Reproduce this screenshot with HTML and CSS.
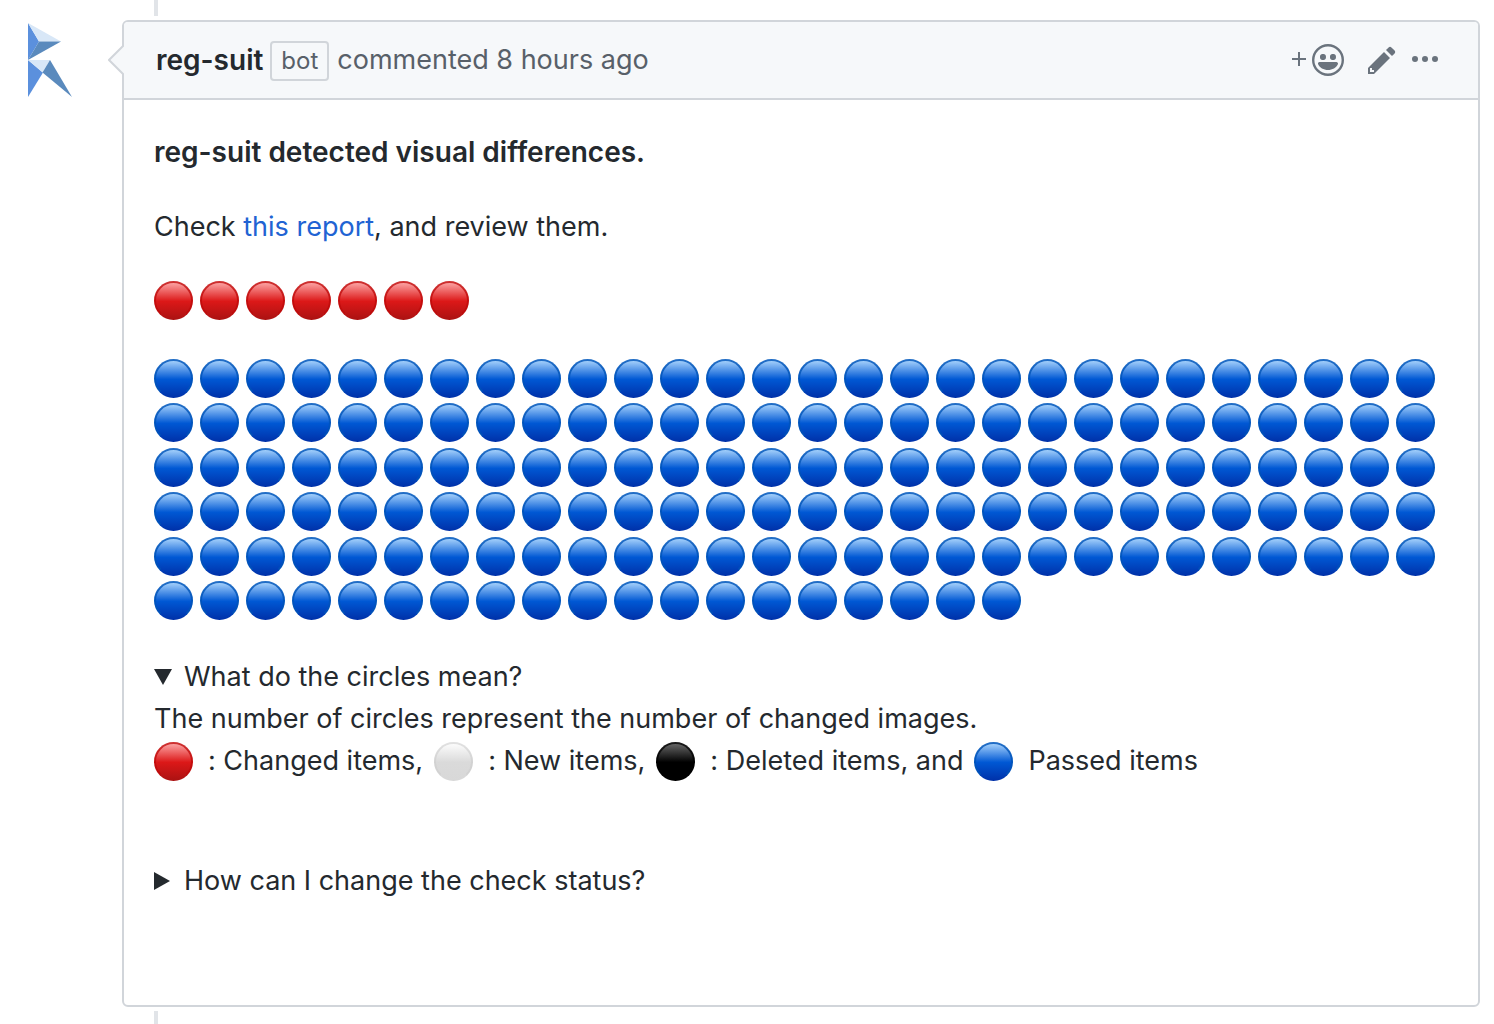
FILE: index.html
```html
<!DOCTYPE html>
<html lang="en">
<head>
  <meta charset="utf-8">
  <title>reg-suit comment</title>
  <link rel="stylesheet" href="styles.css">
</head>
<body>
  <main class="timeline">
    <a class="avatar" href="#" aria-label="reg-suit">
      <svg width="44" height="74" viewBox="0 0 44 74">
        <path fill="#5b90dd" d="M0 0l11 18.500L0 37z"/>
        <path fill="#d8e7f7" d="M0 0l33 18.500H11z"/>
        <path fill="#5a8abd" d="M11 18.500h22L0 37z"/>
        <path fill="#5b90dd" d="M0 37l15 12.500L0 74z"/>
        <path fill="#d8e7f7" d="M0 37h22l-7.500 12.500z"/>
        <path fill="#5a8abd" d="M22 37l22 37-29.500-24.500z"/>
      </svg>
    </a>
    <div class="thread">
      <article class="comment">
        <header class="comment-header">
          <svg class="caret" width="16" height="30" viewBox="0 0 16 30">
            <path d="M16 0L1 15l15 15" fill="#f6f8fa" stroke="#d1d5da" stroke-width="2"/>
          </svg>
          <h3 class="byline"><strong class="author">reg-suit</strong><span class="badge">bot</span><span>commented 8 hours ago</span></h3>
          <div class="actions">
            <button class="action" type="button" aria-label="Add reaction">
              <svg width="52" height="32" viewBox="0 0 26 16">
                <path d="M3 4h1v3h3v1H4v3H3V8H0V7h3z"/>
                <circle cx="18" cy="8" r="7.400" fill="none" stroke="currentColor" stroke-width="1.200"/>
                <path transform="translate(10)" d="M4 6.800v-.59c0-.66.53-1.190 1.200-1.190h.59c.66 0 1.190.53 1.190 1.190v.59c0 .67-.53 1.200-1.190 1.200H5.200C4.530 8 4 7.470 4 6.800zm5 0v-.59c0-.66.53-1.190 1.200-1.190h.59c.66 0 1.190.53 1.190 1.190v.59c0 .67-.53 1.200-1.190 1.200h-.59C9.530 8 9 7.470 9 6.800zm4 3.200c-.72 1.880-2.910 3-5 3s-4.280-1.130-5-3c-.14-.39.23-1 .66-1h8.590c.41 0 .89.61.75 1z"/>
              </svg>
            </button>
            <button class="action edit" type="button" aria-label="Edit comment">
              <svg width="28" height="32" viewBox="0 0 14 16">
                <path fill-rule="evenodd" d="M0 12v3h3l8-8-3-3-8 8zm3 2H1v-2h1v1h1v1zm10.300-9.300L12 6 9 3l1.300-1.300a.996.996 0 0 1 1.410 0l1.590 1.590c.39.39.39 1.020 0 1.410z"/>
              </svg>
            </button>
            <button class="action more" type="button" aria-label="Show options">
              <svg width="26" height="32" viewBox="0 0 13 16">
                <circle cx="1.500" cy="7.500" r="1.500"/><circle cx="6.500" cy="7.500" r="1.500"/><circle cx="11.500" cy="7.500" r="1.500"/>
              </svg>
            </button>
          </div>
        </header>
        <div class="comment-body">
          <p><strong>reg-suit detected visual differences.</strong></p>
          <p>Check <a class="link" href="#">this report</a>, and review them.</p>
          <div class="dots" data-kind="red" data-count="7"></div>
          <div class="dots passed" data-kind="blue" data-count="159"></div>
          <details class="faq" open>
            <summary>What do the circles mean?</summary>
            <div>The number of circles represent the number of changed images.</div>
            <div class="legend">
              <span class="dot red"></span><span class="meaning">: Changed items,</span>
              <span class="dot white"></span><span class="meaning">: New items,</span>
              <span class="dot black"></span><span class="meaning">: Deleted items, and</span>
              <span class="dot blue"></span><span class="meaning">Passed items</span>
            </div>
          </details>
          <details class="faq">
            <summary>How can I change the check status?</summary>
          </details>
        </div>
      </article>
    </div>
  </main>
  <script src="dots.js"></script>
</body>
</html>
```
FILE: styles.css
```css
* {
  box-sizing: border-box;
}

body {
  margin: 0;
  background: #fff;
  color: #24292e;
  font-family: Inter, "Liberation Sans", sans-serif;
  font-size: 27px;
  font-variant-ligatures: no-contextual;
  line-height: 42px;
}

p {
  margin: 0 0 32px;
}

strong {
  font-size: 28px;
  font-weight: 600;
}

.timeline {
  display: grid;
  grid-template-columns: 94px 1fr;
  min-height: 100vh;
  padding: 0 14px 0 28px;
}

.avatar {
  padding-top: 23px;
}

.avatar svg {
  display: block;
}

.thread {
  display: flex;
  flex-direction: column;
}

.thread::before,
.thread::after {
  content: "";
  width: 4px;
  margin-left: 32px;
  background: #e1e4e8;
}

.thread::before {
  height: 16px;
  margin-bottom: 4px;
}

.thread::after {
  flex: 1;
  margin-top: 4px;
}

.comment {
  border: 2px solid #d1d5da;
  border-radius: 6px;
}

.comment-header {
  position: relative;
  display: flex;
  align-items: center;
  justify-content: space-between;
  padding: 17px 40px 17px 32px;
  border-bottom: 2px solid #d1d5da;
  border-radius: 4px 4px 0 0;
  background: #f6f8fa;
}

.caret {
  position: absolute;
  top: 23px;
  left: -16px;
}

.byline {
  display: flex;
  align-items: center;
  margin: 0;
  color: #586069;
  font-size: 27px;
  font-weight: 400;
  line-height: 40px;
}

.author {
  color: #24292e;
}

.badge {
  margin: 2px 8px 0 7px;
  padding: 0 9px;
  border: 2px solid #d1d5da;
  border-radius: 4px;
  font-size: 24px;
  line-height: 36px;
}

.actions {
  display: flex;
}

.action {
  padding: 0;
  border: 0;
  background: none;
  color: #6a737d;
}

.action svg {
  display: block;
  fill: currentColor;
}

.edit {
  margin-left: 24px;
}

.more {
  margin-left: 16px;
}

.comment-body {
  padding: 31px 30px 103px;
}

.link {
  color: #2163d3;
  text-decoration: none;
}

.dots {
  display: flex;
  flex-wrap: wrap;
  align-content: space-between;
  column-gap: 7px;
  row-gap: 4px;
  margin-bottom: 39px;
  padding-top: 1px;
}

.dots.passed {
  min-height: 261px;
  margin-bottom: 36px;
  padding-top: 0;
}

.dot {
  flex: none;
  width: 39px;
  height: 39px;
  border: 2px solid;
  border-color: var(--edge) var(--edge) transparent;
  border-radius: 50%;
  background: linear-gradient(var(--shine), var(--middle) 52%, var(--base)) border-box;
}

.red {
  --edge: rgba(190, 10, 10, 0.75);
  --shine: #ffb0b0;
  --middle: #dc1818;
  --base: #aa1212;
}

.blue {
  --edge: rgba(0, 84, 184, 0.8);
  --shine: #b4dcff;
  --middle: #0058d4;
  --base: #0030a8;
}

.white {
  --edge: rgba(205, 205, 205, 0.6);
  --shine: #fff;
  --middle: #dadada;
  --base: #d8d8d8;
}

.black {
  --edge: rgba(0, 0, 0, 0.75);
  --shine: #707070;
  --middle: #000;
  --base: #000;
}

.faq {
  margin-bottom: 78px;
}

.faq:last-child {
  margin-bottom: 0;
}

.faq summary {
  display: flex;
  align-items: center;
  gap: 14px;
  list-style: none;
}

.faq summary::before {
  content: "";
  width: 16px;
  height: 18px;
  background: currentColor;
  clip-path: polygon(0 0, 100% 50%, 0 100%);
}

.faq[open] summary {
  gap: 12px;
}

.faq[open] summary::before {
  width: 18px;
  height: 16px;
  clip-path: polygon(0 0, 100% 0, 50% 100%);
}

.legend {
  display: flex;
  flex-wrap: wrap;
  align-items: center;
}

.meaning {
  margin: 0 11px 0 15px;
}
```
FILE: dots.js
```js
document.querySelectorAll(".dots").forEach((list) => {
  for (let i = 0; i < Number(list.dataset.count); i += 1) {
    const dot = document.createElement("span");
    dot.className = `dot ${list.dataset.kind}`;
    list.append(dot);
  }
});
```
